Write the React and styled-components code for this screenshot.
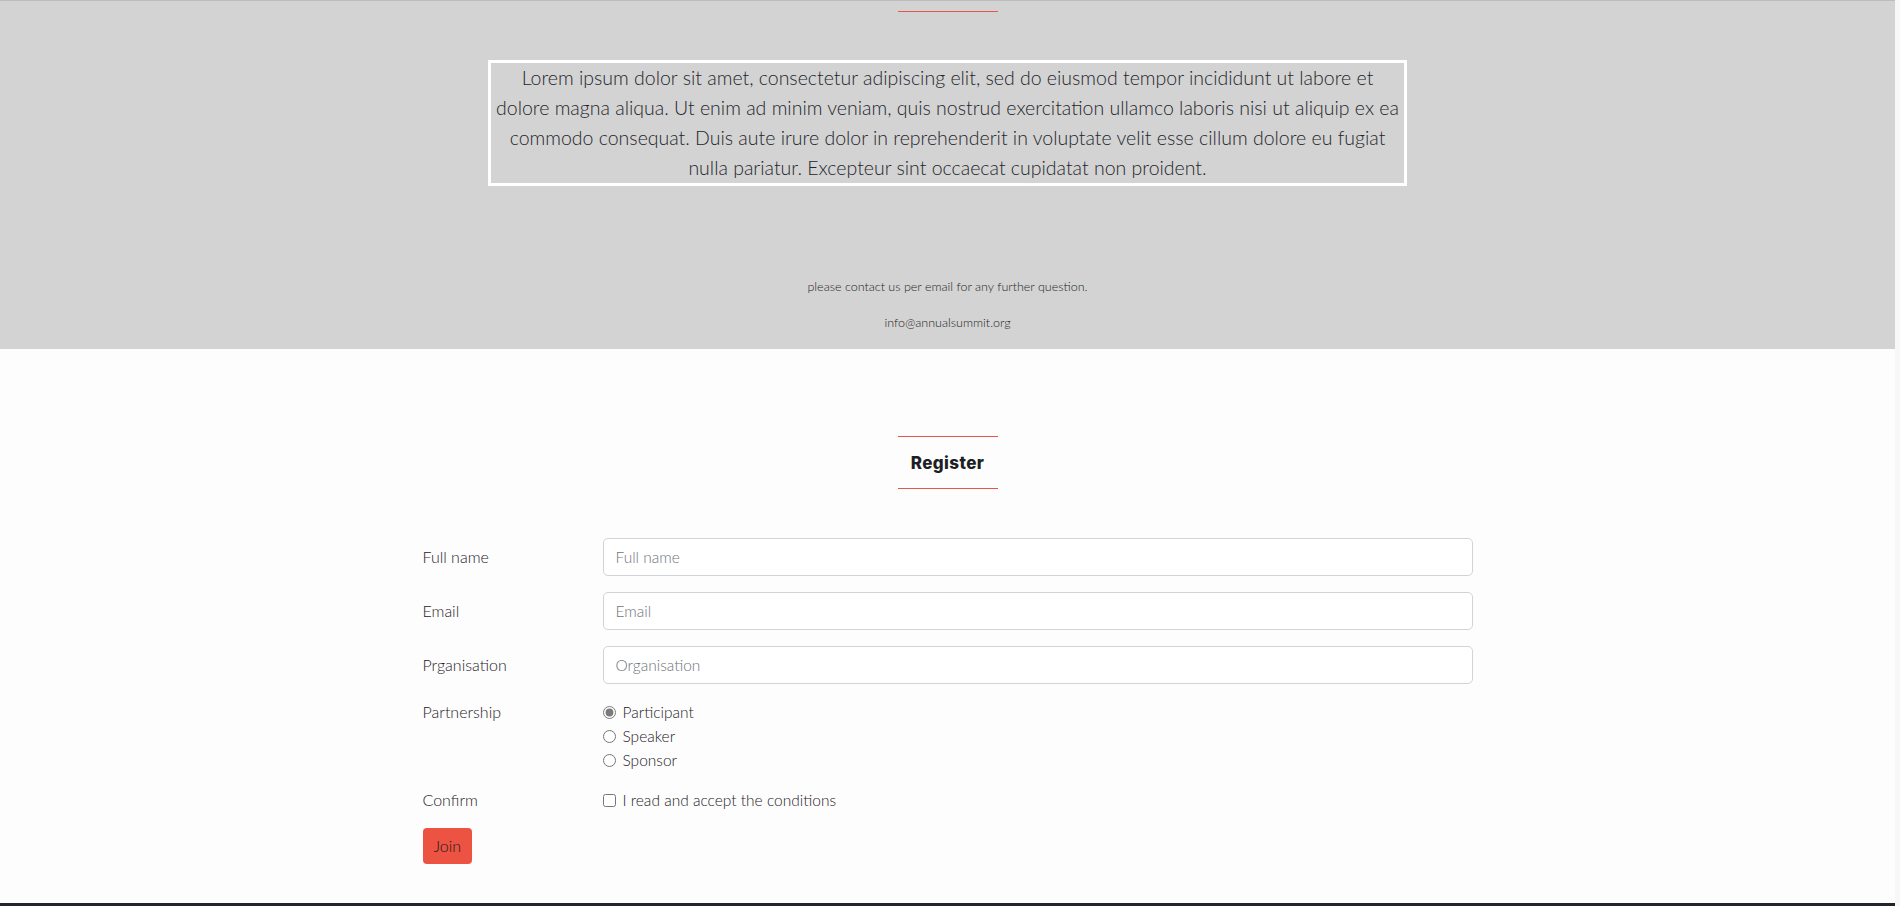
import React from "react";
import styled, { createGlobalStyle } from "styled-components";

const GlobalStyle = createGlobalStyle`
  html, body {
    margin: 0;
    padding: 0;
    background: #f7f7f7;
  }
  body {
    font-family: "Lato", "Liberation Sans", sans-serif;
    color: #212529;
  }
  * { box-sizing: border-box; }
`;

const Page = styled.div`
  margin-right: 5px;
  background: #fdfdfd;
`;

const InfoSection = styled.section`
  background: #d3d3d3;
  border-top: 1px solid #bdbdbd;
  display: flex;
  flex-direction: column;
  align-items: center;
  padding: 10px 0 18px;
`;

const Accent = styled.div`
  width: 100px;
  height: 1px;
  background: #e4574a;
`;

const LoremBox = styled.p`
  margin: 48px 0 0;
  width: 919px;
  border: 3px solid #ffffff;
  padding: 0;
  font-size: 19.5px;
  font-weight: 300;
  line-height: 30px;
  white-space: nowrap;
  text-align: center;
  color: #23262c;
`;

const ContactText = styled.p`
  margin: ${(p) => p.$top}px 0 0;
  font-size: 12.5px;
  font-weight: 300;
  line-height: 16px;
  color: #1f1f1f;
  text-align: center;
`;

const RegisterSection = styled.section`
  display: flex;
  flex-direction: column;
  align-items: center;
  padding: 87px 0 39px;
`;

const Title = styled.h2`
  margin: 0;
  width: 100px;
  border-top: 1px solid #e4574a;
  border-bottom: 1px solid #e4574a;
  padding: 14px 0 13px;
  font-family: "Inter", "Lato", sans-serif;
  font-weight: 800;
  font-size: 17px;
  letter-spacing: 0.4px;
  line-height: 24px;
  text-align: center;
  color: #1d1f24;
`;

const Form = styled.form`
  width: 1050px;
  margin-top: 49px;
  display: flex;
  flex-direction: column;
  align-items: flex-start;
`;

const Row = styled.div`
  width: 100%;
  display: grid;
  grid-template-columns: 180px 1fr;
  margin-bottom: 16px;
`;

const Label = styled.label`
  font-size: 16px;
  font-weight: 300;
  line-height: 24px;
  padding: ${(p) => (p.$flat ? "0" : "7px 0")};
  color: #1f2227;
`;

const Input = styled.input`
  width: 100%;
  height: 38px;
  border: 1px solid #ced4da;
  border-radius: 5px;
  padding: 6px 12px;
  font-family: "Lato", sans-serif;
  font-size: 15.5px;
  font-weight: 300;
  color: #212529;
  background: #fff;
  outline: none;
  &::placeholder {
    color: #6f747b;
  }
`;

const OptionList = styled.div`
  display: flex;
  flex-direction: column;
`;

const Option = styled.label`
  display: flex;
  align-items: center;
  height: 24px;
  font-size: 15.5px;
  font-weight: 300;
  color: #1f2227;
`;

const Radio = styled.input`
  width: 13px;
  height: 13px;
  margin: 0 7px 0 0;
  accent-color: #7a7a7a;
`;

const Check = styled.input`
  width: 13px;
  height: 13px;
  margin: 0 7px 0 0;
  accent-color: #7a7a7a;
`;

const JoinButton = styled.button`
  height: 36px;
  padding: 6px 11px;
  border: none;
  border-radius: 4px;
  background: #ec5343;
  color: #1a1a1a;
  font-family: "Lato", sans-serif;
  font-size: 16px;
  font-weight: 300;
  line-height: 24px;
  cursor: pointer;
`;

const Footer = styled.footer`
  background: #212529;
  height: 80px;
`;

const fields = [
  { label: "Full name", placeholder: "Full name" },
  { label: "Email", placeholder: "Email" },
  { label: "Prganisation", placeholder: "Organisation" },
];

const options = ["Participant", "Speaker", "Sponsor"];

const loremLines = [
  "Lorem ipsum dolor sit amet, consectetur adipiscing elit, sed do eiusmod tempor incididunt ut labore et",
  "dolore magna aliqua. Ut enim ad minim veniam, quis nostrud exercitation ullamco laboris nisi ut aliquip ex ea",
  "commodo consequat. Duis aute irure dolor in reprehenderit in voluptate velit esse cillum dolore eu fugiat",
  "nulla pariatur. Excepteur sint occaecat cupidatat non proident.",
];

export default function App() {
  return (
    <>
      <GlobalStyle />
      <Page>
        <InfoSection>
          <Accent />
          <LoremBox>
            {loremLines.map((line, i) => (
              <React.Fragment key={i}>
                {line}
                {i < loremLines.length - 1 && <br />}
              </React.Fragment>
            ))}
          </LoremBox>
          <ContactText $top={93}>please contact us per email for any further question.</ContactText>
          <ContactText $top={20}>info@annualsummit.org</ContactText>
        </InfoSection>
        <RegisterSection>
          <Title>Register</Title>
          <Form onSubmit={(e) => e.preventDefault()}>
            {fields.map((f) => (
              <Row key={f.label}>
                <Label>{f.label}</Label>
                <Input type="text" placeholder={f.placeholder} />
              </Row>
            ))}
            <Row>
              <Label $flat>Partnership</Label>
              <OptionList>
                {options.map((o, i) => (
                  <Option key={o}>
                    <Radio type="radio" name="partnership" defaultChecked={i === 0} />
                    {o}
                  </Option>
                ))}
              </OptionList>
            </Row>
            <Row>
              <Label $flat>Confirm</Label>
              <Option>
                <Check type="checkbox" />
                I read and accept the conditions
              </Option>
            </Row>
            <JoinButton type="submit">Join</JoinButton>
          </Form>
        </RegisterSection>
        <Footer />
      </Page>
    </>
  );
}
